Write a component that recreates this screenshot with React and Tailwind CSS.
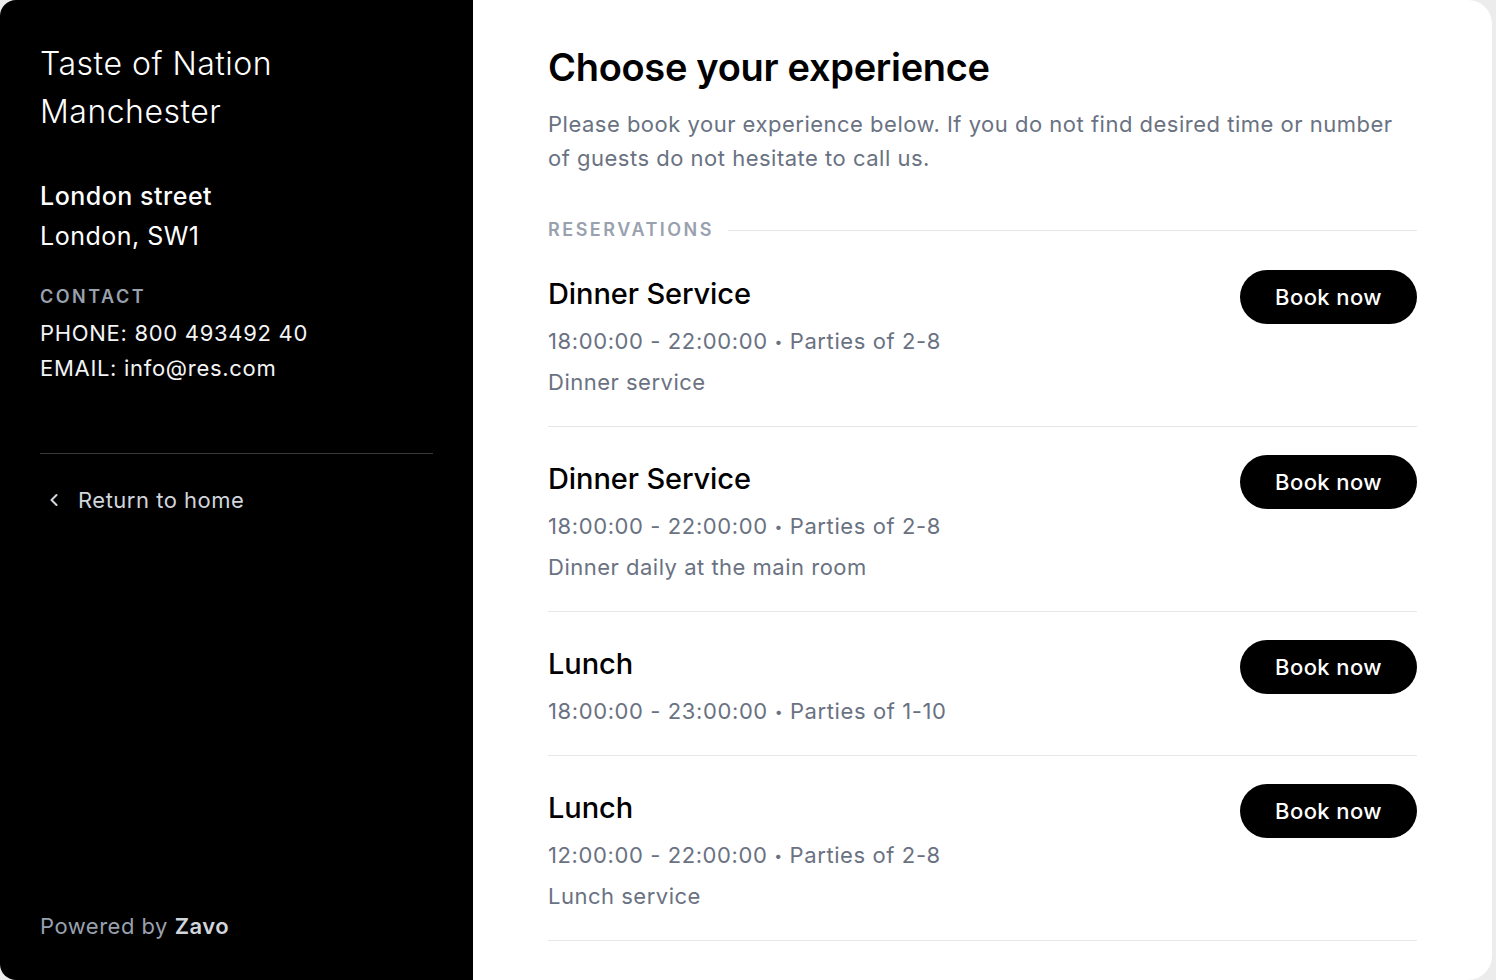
import { ChevronLeft } from 'lucide-react'

const experiences = [
  { title: 'Dinner Service', time: '18:00:00 - 22:00:00', parties: 'Parties of 2-8', description: 'Dinner service' },
  { title: 'Dinner Service', time: '18:00:00 - 22:00:00', parties: 'Parties of 2-8', description: 'Dinner daily at the main room' },
  { title: 'Lunch', time: '18:00:00 - 23:00:00', parties: 'Parties of 1-10', description: null },
  { title: 'Lunch', time: '12:00:00 - 22:00:00', parties: 'Parties of 2-8', description: 'Lunch service' },
]

const Sidebar = () => (
  <aside className="w-[473px] shrink-0 bg-black text-white flex flex-col px-10 pt-10 pb-[37px]">
    <h1 className="text-[32px] leading-[48px] font-light tracking-[0.5px]">
      Taste of Nation
      <br />
      Manchester
    </h1>

    <div className="mt-10 tracking-[0.5px]">
      <p className="text-[25px] leading-[40px] font-medium">London street</p>
      <p className="text-[25px] leading-[40px]">London, SW1</p>
    </div>

    <div className="mt-[29px]">
      <p className="text-[18px] leading-6 font-semibold tracking-[2.5px] text-gray-400">CONTACT</p>
      <div className="mt-[7px] text-[22px] leading-[35px] tracking-[0.7px] text-gray-100">
        <p>PHONE: 800 493492 40</p>
        <p>EMAIL: info@res.com</p>
      </div>
    </div>

    <div className="mt-[67px] border-t border-[#3a3a3a] w-[393px]" />

    <button className="mt-[29px] flex items-center gap-[14px] text-[22px] leading-[34px] tracking-[0.5px] text-gray-300 pl-[4px]">
      <ChevronLeft className="h-[20px] w-[20px]" strokeWidth={2.5} />
      Return to home
    </button>

    <p className="mt-auto text-[22px] leading-[34px] tracking-[0.5px] text-gray-400">
      Powered by <span className="font-semibold text-gray-300">Zavo</span>
    </p>
  </aside>
)

const ExperienceRow = ({ item }) => (
  <div className="flex items-start justify-between pt-7 pb-[27px] border-b border-gray-200">
    <div>
      <h3 className="text-[29px] leading-[48px] font-medium text-black tracking-[-0.1px]">{item.title}</h3>
      <p className="mt-[6px] h-[34px] text-[22px] leading-[34px] tracking-[0.6px] text-gray-500">
        {item.time} <span className="text-[14px] leading-none align-[2px]">•</span> {item.parties}
      </p>
      {item.description && (
        <p className="mt-[7px] text-[22px] leading-[34px] tracking-[0.5px] text-gray-500">{item.description}</p>
      )}
    </div>
    <button className="w-[177px] h-[54px] rounded-full bg-black text-white text-[22px] font-medium tracking-[0.4px]">
      Book now
    </button>
  </div>
)

export default function App() {
  return (
    <div className="min-h-screen bg-[#ececec] font-['Inter',sans-serif]">
      <div className="w-[1492px] h-[980px] flex overflow-hidden rounded-l-[16px] rounded-r-[24px] bg-white">
        <Sidebar />

        <main className="flex-1 px-[75px] pt-[43px]">
          <h2 className="text-[38px] leading-[48px] font-semibold text-black tracking-[-0.3px]">
            Choose your experience
          </h2>
          <p className="mt-4 text-[22px] leading-[34px] tracking-[0.5px] text-gray-500 max-w-[868px]">
            Please book your experience below. If you do not find desired time or number of guests do not hesitate to call us.
          </p>

          <div className="mt-[43px] flex items-center gap-[14px]">
            <span className="text-[18px] leading-6 font-semibold tracking-[2.5px] text-gray-400">RESERVATIONS</span>
            <div className="flex-1 border-t border-gray-200" />
          </div>

          <div>
            {experiences.map((item, i) => (
              <ExperienceRow key={i} item={item} />
            ))}
          </div>
        </main>
      </div>
    </div>
  )
}
